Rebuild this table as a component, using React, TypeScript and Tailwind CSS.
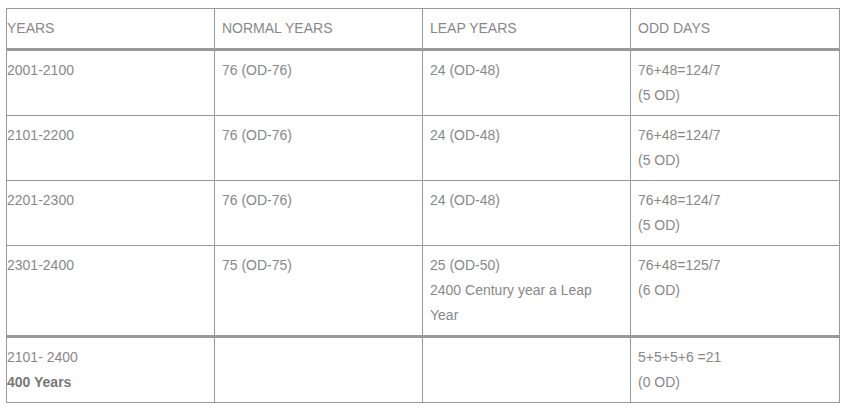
import React from "react";

const rows: { c: React.ReactNode[]; thick?: boolean }[] = [
  { c: ["2001-2100", "76 (OD-76)", "24 (OD-48)", <>76+48=124/7<br />(5 OD)</>] },
  { c: ["2101-2200", "76 (OD-76)", "24 (OD-48)", <>76+48=124/7<br />(5 OD)</>] },
  { c: ["2201-2300", "76 (OD-76)", "24 (OD-48)", <>76+48=124/7<br />(5 OD)</>] },
  {
    c: [
      "2301-2400",
      "75 (OD-75)",
      <>25 (OD-50)<br />2400 Century year a Leap Year</>,
      <>76+48=125/7<br />(6 OD)</>,
    ],
    thick: true,
  },
  {
    c: [
      <>2101- 2400<br /><b className="font-bold text-[#777]">400 Years</b></>,
      "",
      "",
      <>5+5+5+6 =21<br />(0 OD)</>,
    ],
  },
];

export default function App() {
  return (
    <div className="bg-white w-[846px] h-[411px] pt-[8px] pl-[6px] font-['Liberation_Sans',Arial,sans-serif]">
      <table className="border-collapse table-fixed w-[833px] text-[14px] leading-[25px] text-[#888]">
        <colgroup>
          <col className="w-[208px]" />
          <col className="w-[208px]" />
          <col className="w-[208px]" />
          <col className="w-[209px]" />
        </colgroup>
        <thead>
          <tr>
            {["YEARS", "NORMAL YEARS", "LEAP YEARS", "ODD DAYS"].map((h, i) => (
              <th
                key={h}
                className={`border border-[#999] border-b-[3px] text-left font-normal align-top pt-[7px] pb-[7px] ${i === 0 ? "pl-0" : "pl-[7px]"} pr-[8px]`}
              >
                {h}
              </th>
            ))}
          </tr>
        </thead>
        <tbody>
          {rows.map((r, ri) => (
            <tr key={ri}>
              {r.c.map((c, i) => (
                <td
                  key={i}
                  className={`border border-[#999] align-top pt-[7px] pb-[7px] ${i === 0 ? "pl-0" : "pl-[7px]"} pr-[8px] ${r.thick ? "border-b-[3px]" : ""}`}
                >
                  {c}
                </td>
              ))}
            </tr>
          ))}
        </tbody>
      </table>
    </div>
  );
}
